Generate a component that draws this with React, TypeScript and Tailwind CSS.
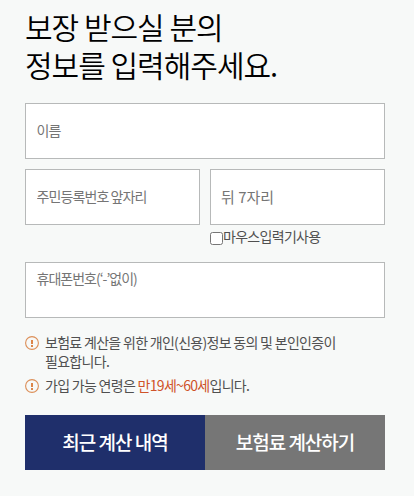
const FIELD =
  'block h-14 w-full rounded-none border border-[#b7b9b9] bg-white px-[10.5px] pb-0.5 text-sm tracking-[-0.9px] text-[#757575] placeholder-[#757575] outline-none'

export default function App() {
  return (
    <div className="h-[496px] w-[414px] overflow-hidden bg-[#f7f9f8] px-[25px] pt-[7px] font-['Noto_Sans_CJK_KR','Noto_Sans',sans-serif] text-[#505050]">
      <h1 className="text-[30px] leading-[38px] font-[350] tracking-[-1px] text-black">
        보장 받으실 분의
        <br />
        정보를 입력해주세요.
      </h1>

      <form className="mt-5 w-[360px]" onSubmit={(e) => e.preventDefault()}>
        <input className={FIELD} placeholder="이름" />

        <div className="mt-2.5 grid grid-cols-2 gap-2.5">
          <input className={FIELD} placeholder="주민등록번호 앞자리" />
          <div>
            <input
              className="block h-14 w-full rounded-none border border-[#b7b9b9] bg-white px-2.5 pb-0.5 text-[15px] placeholder-[#757575] outline-none"
              placeholder="뒤 7자리"
            />
            <label className="flex h-[27px] text-sm leading-[22px] tracking-[-0.7px]">
              <input type="checkbox" className="mt-[7px] h-[13px] w-[13px] shrink-0" />
              마우스입력기사용
            </label>
          </div>
        </div>

        <div className="mt-2.5 h-14 border border-[#b7b9b9] bg-white px-[10.5px] pt-1 text-sm leading-[22px] tracking-[-1px] text-[#757575]">
          휴대폰번호(‘-’없이)
        </div>

        <ul className="mt-[15px] text-sm leading-[19px] tracking-[-0.7px]">
          <Notice>
            보험료 계산을 위한 개인(신용)정보 동의 및 본인인증이
            <br />
            필요합니다.
          </Notice>
          <Notice>
            가입 가능 연령은 <span className="text-[#cf5329]">만19세~60세</span>입니다.
          </Notice>
        </ul>

        <div className="mt-5 flex h-[55px] text-[19px] font-medium text-white">
          <button className="w-1/2 bg-[#1f2f6b] tracking-[-1px]">최근 계산 내역</button>
          <button className="w-1/2 bg-[#767676] tracking-[-1px]">보험료 계산하기</button>
        </div>
      </form>
    </div>
  )
}

function Notice({ children }: { children: React.ReactNode }) {
  return (
    <li className="mb-[5px] flex gap-1.5">
      <svg className="mt-[3px] h-3.5 w-3.5 shrink-0" viewBox="0 0 14 14" fill="none">
        <circle cx="7" cy="7" r="6.4" stroke="#dc8f58" strokeWidth="1.1" />
        <path d="M7 4v4M7 9v2" stroke="#dc8548" strokeWidth="2" />
      </svg>
      <p className="whitespace-nowrap">{children}</p>
    </li>
  )
}
